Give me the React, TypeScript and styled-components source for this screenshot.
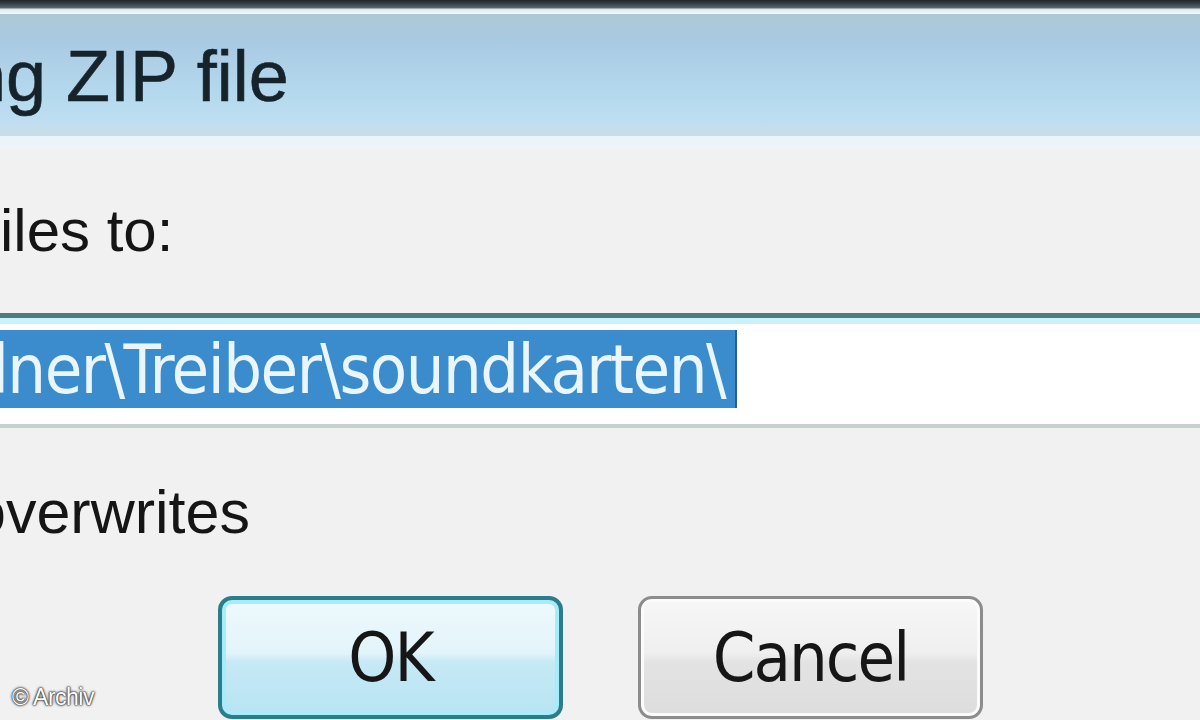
import styled, { createGlobalStyle } from "styled-components";

const GlobalStyle = createGlobalStyle`
  html, body {
    margin: 0;
    padding: 0;
    background: #f1f1f1;
  }
`;

const App: React.FC = () => {
  return (
    <>
      <GlobalStyle />
      <Dialog>
        <FrameEdge />
        <TitleBar>
          <TitleText>ng ZIP file</TitleText>
        </TitleBar>
        <TitleGlow />
        <Body>
          <Label>iles to:</Label>
          <PathInput>
            <Selection>dner\Treiber\soundkarten\</Selection>
          </PathInput>
          <CheckLabel>overwrites</CheckLabel>
          <ButtonRow>
            <Button $primary>OK</Button>
            <Button>Cancel</Button>
          </ButtonRow>
        </Body>
        <Credit>© Archiv</Credit>
      </Dialog>
    </>
  );
};
export default App;

const Dialog = styled.div`
  position: relative;
  width: 1200px;
  height: 720px;
  overflow: hidden;
  background: #f1f1f1;
  font-family: "Liberation Sans", Arial, sans-serif;
`;

const FrameEdge = styled.div`
  height: 14px;
  background: linear-gradient(
    to bottom,
    #1f272d 0px,
    #38444c 4px,
    #5c6a72 8px,
    #dbe8ee 9px,
    #f3f9fc 14px
  );
`;

const TitleBar = styled.div`
  box-sizing: border-box;
  height: 122px;
  padding-top: 26px;
  background: linear-gradient(
    to bottom,
    #afc8d3 0%,
    #a8c9e2 20%,
    #b0d2e9 45%,
    #b5daee 70%,
    #bfdef3 88%,
    #c9dde4 100%
  );
`;

const TitleText = styled.div`
  margin-left: -34px;
  font-size: 72px;
  line-height: 1;
  color: #17232b;
  white-space: nowrap;
  -webkit-text-stroke: 0.6px #17232b;
`;

const TitleGlow = styled.div`
  height: 14px;
  background: linear-gradient(to bottom, #eaf5fb, #f0f4f6);
`;

const Body = styled.div`
  display: flex;
  flex-direction: column;
`;

const Label = styled.div`
  margin-top: 51px;
  font-size: 60px;
  line-height: 1;
  color: #151515;
  white-space: nowrap;
`;

const PathInput = styled.div`
  box-sizing: border-box;
  margin-top: 52px;
  height: 115px;
  padding: 12px 0 16px;
  background: #ffffff;
  border-top: 5px solid #4e7c80;
  border-bottom: 4px solid #c8cfd0;
  box-shadow: inset 0 6px 0 #c9f3f9;
  display: flex;
  align-items: flex-start;
`;

const Selection = styled.span`
  display: inline-block;
  height: 78px;
  line-height: 80px;
  margin-left: -30px;
  padding-right: 10px;
  background: #3a8ccd;
  border-right: 2px solid #2a5f8c;
  color: #eaf6ff;
  font-family: "DejaVu Sans Condensed", "Liberation Sans", sans-serif;
  font-size: 68px;
  letter-spacing: -1.5px;
  white-space: nowrap;
`;

const CheckLabel = styled.div`
  margin-top: 54px;
  margin-left: -28px;
  font-size: 61px;
  line-height: 1;
  color: #151515;
  white-space: nowrap;
`;

const ButtonRow = styled.div`
  display: flex;
  gap: 75px;
  margin-top: 53px;
  padding-left: 218px;
`;

const Button = styled.div<{ $primary?: boolean }>`
  box-sizing: border-box;
  width: 345px;
  height: 123px;
  display: flex;
  align-items: center;
  justify-content: center;
  border-radius: 14px;
  border: ${(p) => (p.$primary ? "4px solid #2b7d8a" : "3px solid #8c8c8c")};
  background: ${(p) =>
    p.$primary
      ? "linear-gradient(to bottom, #eef9fd 0%, #e2f4fa 46%, #c6e9f5 54%, #b8e4f3 100%)"
      : "linear-gradient(to bottom, #f7f7f7 0%, #efefef 46%, #e3e3e3 54%, #dddddd 100%)"};
  box-shadow: ${(p) =>
    p.$primary ? "inset 0 0 0 4px #a6edfb" : "inset 0 0 0 3px #fbfbfb"};
  color: #161616;
  font-family: "DejaVu Sans Condensed", "Liberation Sans", sans-serif;
  font-size: 68px;
  letter-spacing: -2px;
`;

const Credit = styled.div`
  position: absolute;
  left: 12px;
  bottom: 9px;
  font-size: 23px;
  letter-spacing: -0.5px;
  color: #ffffff;
  text-shadow: 0 0 3px #222, 0 0 2px #222, 0 0 1px #222;
`;
